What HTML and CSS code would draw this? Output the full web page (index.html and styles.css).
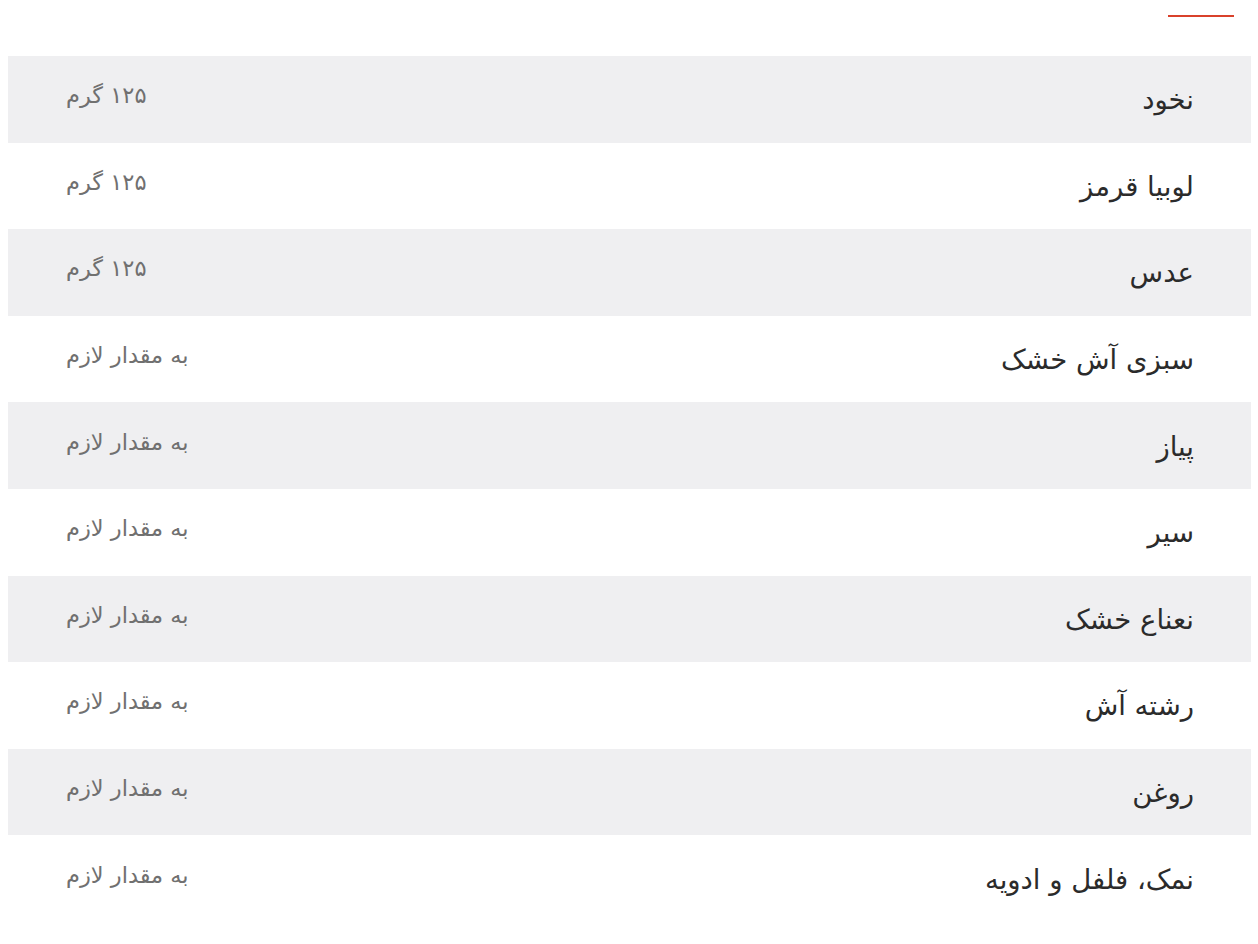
FILE: index.html
```html
<!DOCTYPE html>
<html lang="fa" dir="rtl">
<head>
<meta charset="utf-8">
<link rel="stylesheet" href="styles.css">
</head>
<body>
<div class="section">
  <div class="head"><span class="bar"></span></div>
  <div class="list">
    <div class="row"><span class="name">نخود</span><span class="val">۱۲۵ گرم</span></div>
    <div class="row"><span class="name">لوبیا قرمز</span><span class="val">۱۲۵ گرم</span></div>
    <div class="row"><span class="name">عدس</span><span class="val">۱۲۵ گرم</span></div>
    <div class="row"><span class="name">سبزی آش خشک</span><span class="val">به مقدار لازم</span></div>
    <div class="row"><span class="name">پیاز</span><span class="val">به مقدار لازم</span></div>
    <div class="row"><span class="name">سیر</span><span class="val">به مقدار لازم</span></div>
    <div class="row"><span class="name">نعناع خشک</span><span class="val">به مقدار لازم</span></div>
    <div class="row"><span class="name">رشته آش</span><span class="val">به مقدار لازم</span></div>
    <div class="row"><span class="name">روغن</span><span class="val">به مقدار لازم</span></div>
    <div class="row"><span class="name">نمک، فلفل و ادویه</span><span class="val">به مقدار لازم</span></div>
  </div>
</div>
</body>
</html>
```
FILE: styles.css
```css
html, body {
  background: #fff;
}
body {
  margin: 0 7px 0 8px;
  font-family: "DejaVu Sans", sans-serif;
}
.head {
  height: 56px;
  display: flex;
  padding-right: 17px;
}
.bar {
  display: block;
  width: 66px;
  height: 2px;
  margin-top: 15px;
  background: #d9412b;
}
.list {
  display: flex;
  flex-direction: column;
}
.row {
  height: 86.6px;
  display: flex;
  justify-content: space-between;
  align-items: center;
  padding: 0 57px 0 58px;
}
.row:nth-child(odd) {
  background: #efeff1;
}
.name {
  font-size: 27.5px;
  color: #2b2b2b;
}
.val {
  font-size: 22.5px;
  color: #707070;
  margin-bottom: 8px;
}
```
